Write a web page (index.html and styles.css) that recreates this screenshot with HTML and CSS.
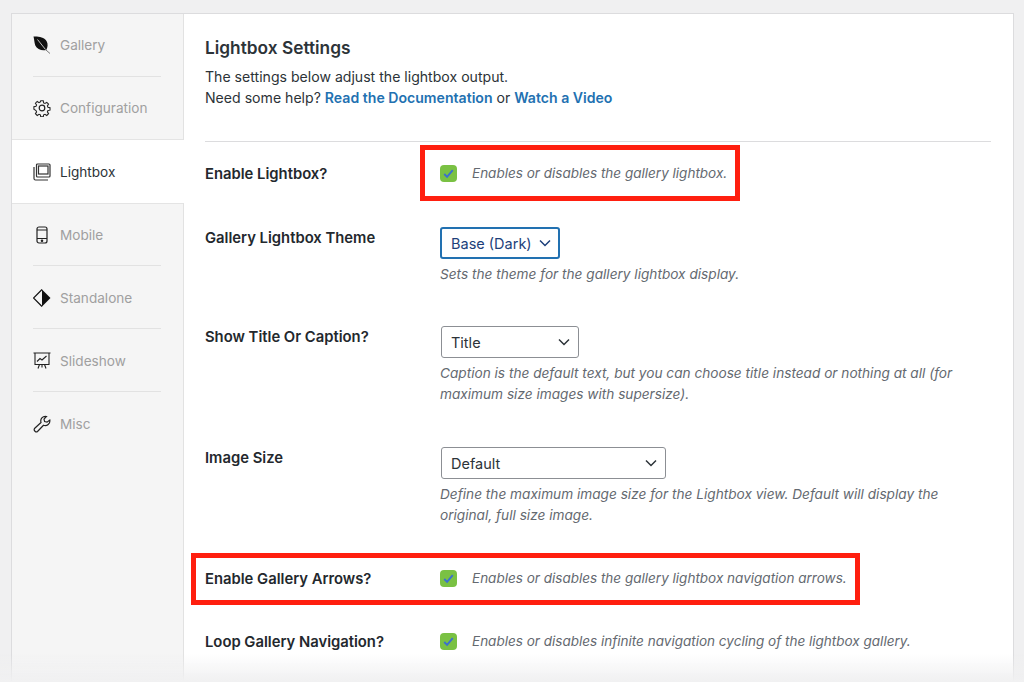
FILE: index.html
```html
<!DOCTYPE html>
<html lang="en">
<head>
    <meta charset="UTF-8">
    <title>Lightbox Settings</title>
    <link rel="stylesheet" href="styles.css">
</head>
<body>
    <div class="panel">
        <ul class="tabs">
            <li class="tab">
                <svg class="tab-icon" viewBox="0 0 18 18"><path d="M.5 .5C5 .2 11 1 13.500 5c1.800 3 1.200 6.500-.3 9C9 15 4 13.500 2.300 9.500 1.300 6.500 1.300 3.500.5 .5z" fill="#111"/><path d="M4.500 3.500l8 10" stroke="#eee" stroke-width=".8" fill="none"/><path d="M13 14l4 3.500" stroke="#777" stroke-width="1" fill="none"/></svg>
                <span>Gallery</span>
            </li>
            <li class="tab">
                <svg class="tab-icon" viewBox="0 0 18 18" fill="none" stroke="#222" stroke-width="1.200"><circle cx="9" cy="9" r="2.800"/><path d="M7.600 1h2.800l.4 2.300 1.500.7 2-1.300 2 2-1.300 2 .6 1.500 2.300.4v2.800l-2.300.4-.6 1.500 1.300 2-2 2-2-1.300-1.500.6-.4 2.300H7.600l-.4-2.300-1.500-.6-2 1.300-2-2 1.300-2-.7-1.500L0 10.400V7.600l2.300-.4.7-1.500-1.300-2 2-2 2 1.300 1.500-.7z" transform="translate(.9 .9) scale(.9)"/></svg>
                <span>Configuration</span>
            </li>
            <li class="tab active">
                <svg class="tab-icon" viewBox="0 0 18 18" fill="none" stroke="#333" stroke-width="1.200"><rect x="3.500" y="1" width="13.500" height="13" rx="1"/><rect x="5.500" y="3" width="9.500" height="8"/><path d="M1 4v11.500A1.500 1.500 0 0 0 2.500 17H15"/></svg>
                <span>Lightbox</span>
            </li>
            <li class="tab">
                <svg class="tab-icon" viewBox="0 0 18 18" fill="none" stroke="#222" stroke-width="1.200"><rect x="4" y="1" width="10" height="16" rx="2"/><path d="M4 4h10M4 12.500h10"/><circle cx="9" cy="14.800" r=".7" fill="#222"/></svg>
                <span>Mobile</span>
            </li>
            <li class="tab">
                <svg class="tab-icon" viewBox="0 0 18 18"><path d="M9 .5L17.500 9 9 17.500z" fill="#111"/><path d="M9 .5L.5 9 9 17.500" fill="none" stroke="#111" stroke-width="1.200"/></svg>
                <span>Standalone</span>
            </li>
            <li class="tab">
                <svg class="tab-icon" viewBox="0 0 18 18" fill="none" stroke="#222" stroke-width="1.100"><path d="M.5 1h17M2 1v11.500h14V1"/><path d="M4 9.500l3-3 2 1.500 4.500-4"/><path d="M6.500 12.500L5 16.500M11.500 12.500l1.500 4M9 12.500v3"/></svg>
                <span>Slideshow</span>
            </li>
            <li class="tab">
                <svg class="tab-icon" viewBox="0 0 18 18" fill="none" stroke="#222" stroke-width="1.200"><path d="M1.500 13.500L8 7.500C7 4 9.500 .8 13.500 1.500L11 4.200l.6 2.400 2.400.6L16.800 5c.6 3.800-2.800 6.500-6.300 5.300L4.500 16.500c-1.500 1.200-4.200-1-3-3z"/></svg>
                <span>Misc</span>
            </li>
        </ul>
        <div class="content">
            <h2 class="title">Lightbox Settings</h2>
            <p class="intro">The settings below adjust the lightbox output.<br>Need some help? <a href="#">Read the Documentation</a> or <a href="#">Watch a Video</a></p>
            <hr class="rule">

            <div class="row row-check first">
                <label>Enable Lightbox?</label>
                <div class="check-line">
                    <span class="check"><svg viewBox="0 0 18 18"><path d="M4.500 9.500l3 3 6-7" fill="none" stroke="#3b6fd0" stroke-width="2"/></svg></span>
                    <em>Enables or disables the gallery lightbox.</em>
                </div>
                <div class="mark mark-one"></div>
            </div>

            <div class="row theme">
                <label>Gallery Lightbox Theme</label>
                <div>
                    <div class="select select-focus select-theme">Base (Dark)<svg viewBox="0 0 12 8"><path d="M1 1.500l5 5 5-5" fill="none" stroke="currentColor" stroke-width="1.500"/></svg></div>
                    <p class="desc">Sets the theme for the gallery lightbox display.</p>
                </div>
            </div>

            <div class="row caption">
                <label>Show Title Or Caption?</label>
                <div>
                    <div class="select select-title">Title<svg viewBox="0 0 12 8"><path d="M1 1.500l5 5 5-5" fill="none" stroke="currentColor" stroke-width="1.500"/></svg></div>
                    <p class="desc">Caption is the default text, but you can choose title instead or nothing at all (for<br>maximum size images with supersize).</p>
                </div>
            </div>

            <div class="row size">
                <label>Image Size</label>
                <div>
                    <div class="select select-size">Default<svg viewBox="0 0 12 8"><path d="M1 1.500l5 5 5-5" fill="none" stroke="currentColor" stroke-width="1.500"/></svg></div>
                    <p class="desc">Define the maximum image size for the Lightbox view. Default will display the<br>original, full size image.</p>
                </div>
            </div>

            <div class="row row-check arrows">
                <label>Enable Gallery Arrows?</label>
                <div class="check-line">
                    <span class="check"><svg viewBox="0 0 18 18"><path d="M4.500 9.500l3 3 6-7" fill="none" stroke="#3b6fd0" stroke-width="2"/></svg></span>
                    <em>Enables or disables the gallery lightbox navigation arrows.</em>
                </div>
                <div class="mark mark-two"></div>
            </div>

            <div class="row row-check loop">
                <label>Loop Gallery Navigation?</label>
                <div class="check-line">
                    <span class="check"><svg viewBox="0 0 18 18"><path d="M4.500 9.500l3 3 6-7" fill="none" stroke="#3b6fd0" stroke-width="2"/></svg></span>
                    <em>Enables or disables infinite navigation cycling of the lightbox gallery.</em>
                </div>
            </div>
        </div>
    </div>
    <div class="fade"></div>
</body>
</html>
```

FILE: styles.css
```css
* {
    margin: 0;
    padding: 0;
    box-sizing: border-box;
}
html, body {
    height: 682px;
    overflow: hidden;
}
body {
    background-color: #f0f0f1;
    color: #2c3338;
    font-family: 'Inter', sans-serif;
    font-size: 13.5px;
    padding: 13px 10px 0 11px;
}
.panel {
    display: flex;
    height: 669px;
    background-color: #fff;
    border: 1px solid #dcdcde;
    border-bottom: none;
}
.tabs {
    width: 172px;
    flex-shrink: 0;
    list-style: none;
    background-color: #f5f5f5;
    border-right: 1px solid #e2e2e2;
}
.tab {
    position: relative;
    display: flex;
    align-items: center;
    gap: 9px;
    height: 63px;
    padding-left: 21px;
    color: #a0a0a0;
    font-size: 13.600px;
}
.tab:nth-child(1) {
    padding-bottom: 1px;
}
.tab:nth-child(2) {
    border-bottom: 1px solid #e4e4e4;
}
.tab:nth-child(n+4):not(:last-child)::after,
.tab:nth-child(1)::after {
    content: "";
    position: absolute;
    left: 21px;
    right: 22px;
    bottom: 0;
    border-bottom: 1px solid #e2e2e2;
}
.tab.active {
    background-color: #fff;
    color: #2c3338;
    margin-right: -1px;
    z-index: 1;
}
.tab.active + .tab {
    box-shadow: inset 0 1px 0 #e4e4e4;
}
.tab-icon {
    width: 18px;
    height: 18px;
    flex-shrink: 0;
}
.content {
    flex: 1;
    padding: 24px 22px 0 21px;
}
.title {
    font-size: 17.300px;
    font-weight: 600;
    line-height: 20px;
    color: #2c3338;
}
.intro {
    margin-top: 8px;
    line-height: 21px;
    font-size: 14.100px;
}
.intro a {
    color: #2271b1;
    font-weight: 600;
    text-decoration: none;
}
.rule {
    border: none;
    border-top: 1px solid #dcdcde;
    margin-top: 33px;
}
.row {
    position: relative;
    display: grid;
    grid-template-columns: 235px 1fr;
}
.row label {
    font-weight: 600;
    color: #23282d;
    font-size: 14.800px;
    line-height: 20px;
}
.row-check {
    align-items: center;
}
.first {
    margin-top: 21px;
}
.theme {
    margin-top: 43px;
}
.caption {
    margin-top: 41px;
}
.size {
    margin-top: 42px;
}
.arrows {
    margin-top: 42px;
}
.loop {
    margin-top: 42px;
}
.theme label,
.caption label,
.size label {
    padding-top: 1px;
}
.check-line {
    display: flex;
    align-items: center;
    gap: 15px;
}
.check {
    width: 17px;
    height: 17px;
    border-radius: 4px;
    background-color: #7ac143;
    flex-shrink: 0;
}
.check svg {
    display: block;
    width: 17px;
    height: 17px;
}
em {
    font-style: italic;
    color: #646970;
    font-size: 13.520px;
    line-height: 21px;
}
.desc {
    margin-top: 5px;
    font-style: italic;
    color: #646970;
    font-size: 13.650px;
    line-height: 21px;
}
.select {
    display: flex;
    align-items: center;
    justify-content: space-between;
    height: 32px;
    margin-left: 1px;
    padding: 0 8px 0 9px;
    border: 1px solid #8c8f94;
    border-radius: 3px;
    background-color: #fff;
    color: #2c3338;
    font-size: 14.500px;
    white-space: nowrap;
}
.select svg {
    width: 12px;
    height: 8px;
    flex-shrink: 0;
}
.select-focus {
    border: 2px solid #2271b1;
    color: #1d3f7a;
    margin-left: 0;
    padding-right: 7px;
}
.select-theme {
    width: 120px;
}
.select-title {
    width: 138px;
}
.select-size {
    width: 225px;
}
.mark {
    position: absolute;
    border: 5px solid #ff1f0f;
    pointer-events: none;
}
.mark-one {
    left: 215px;
    top: -18px;
    width: 320px;
    height: 56px;
}
.mark-two {
    left: -14px;
    top: -15px;
    width: 669px;
    height: 52px;
}
.fade {
    position: fixed;
    left: 0;
    right: 0;
    bottom: 0;
    height: 28px;
    background: linear-gradient(rgba(240, 240, 241, 0), #f0f0f1);
}
```
